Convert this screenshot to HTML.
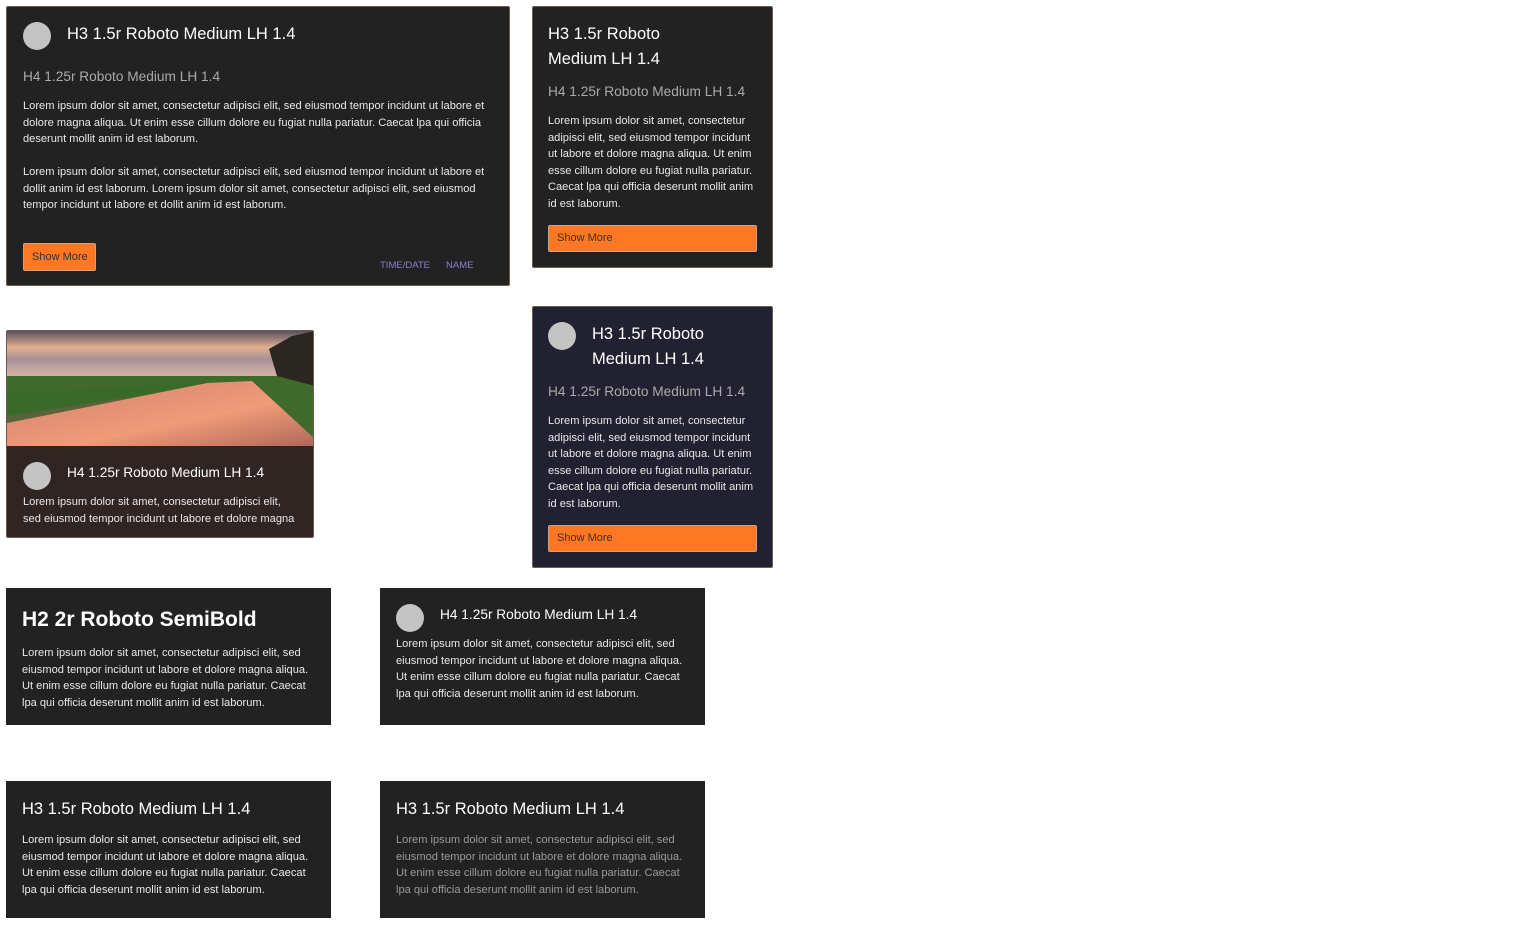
<!DOCTYPE html>
<html><head><style>
body{margin:0;width:1536px;height:932px;background:#fff;font-family:"Liberation Sans",sans-serif;position:relative;overflow:hidden}
.c{position:absolute;background:#222;box-sizing:border-box;color:#eee}
.b{border:1px solid #6e5a50;border-radius:2px}
.t{position:absolute;white-space:nowrap}
.h3{font-size:16.5px;color:#fff;line-height:25px}
.h4{font-size:13.7px;color:#aaa;line-height:20px}
.p{font-size:11.1px;line-height:16.6px;color:#e8e8e8}
.av{position:absolute;width:28px;height:28px;border-radius:50%;background:#c4c4c4}
.btn{position:absolute;background:#ff7722;border:1px solid #c9a08a;border-radius:2px;color:#333;font-size:11px;box-sizing:border-box;padding-left:8px}
</style></head><body>

<div class="c b" style="left:6px;top:6px;width:504px;height:280px">
<div class="av" style="left:16px;top:15px"></div>
<div class="t h3" style="left:60px;top:15px">H3 1.5r Roboto Medium LH 1.4</div>
<div class="t h4" style="left:16px;top:60px">H4 1.25r Roboto Medium LH 1.4</div>
<div class="t p" style="left:16px;top:91px">Lorem ipsum dolor sit amet, consectetur adipisci elit, sed eiusmod tempor incidunt ut labore et<br>dolore magna aliqua. Ut enim esse cillum dolore eu fugiat nulla pariatur. Caecat lpa qui officia<br>deserunt mollit anim id est laborum.</div>
<div class="t p" style="left:16px;top:157px">Lorem ipsum dolor sit amet, consectetur adipisci elit, sed eiusmod tempor incidunt ut labore et<br>dollit anim id est laborum. Lorem ipsum dolor sit amet, consectetur adipisci elit, sed eiusmod<br>tempor incidunt ut labore et dollit anim id est laborum.</div>
<div class="btn" style="left:16px;top:236px;width:73px;height:28px;line-height:26px">Show More</div>
<div class="t" style="left:373px;top:253px;font-size:9.5px;color:#8a7fd0">TIME/DATE</div>
<div class="t" style="left:439px;top:253px;font-size:9.5px;color:#8a7fd0">NAME</div>
</div>

<div class="c b" style="left:532px;top:6px;width:241px;height:262px">
<div class="t h3" style="left:15px;top:15px">H3 1.5r Roboto<br>Medium LH 1.4</div>
<div class="t h4" style="left:15px;top:75px">H4 1.25r Roboto Medium LH 1.4</div>
<div class="t p" style="left:15px;top:106px">Lorem ipsum dolor sit amet, consectetur<br>adipisci elit, sed eiusmod tempor incidunt<br>ut labore et dolore magna aliqua. Ut enim<br>esse cillum dolore eu fugiat nulla pariatur.<br>Caecat lpa qui officia deserunt mollit anim<br>id est laborum.</div>
<div class="btn" style="left:15px;top:218px;width:209px;height:27px;line-height:25px">Show More</div>
</div>

<div class="c b" style="left:6px;top:330px;width:308px;height:208px;background:#2f2623;overflow:hidden">
<svg style="position:absolute;left:0;top:0" width="308" height="115" viewBox="0 0 308 115">
<defs><linearGradient id="s" x1="0" y1="0" x2="0" y2="1"><stop offset="0" stop-color="#5a5060"/><stop offset=".35" stop-color="#e0b090"/><stop offset=".6" stop-color="#a89098"/><stop offset="1" stop-color="#d8b8a8"/></linearGradient>
<linearGradient id="w" x1="0" y1="0" x2="1" y2="1"><stop offset="0" stop-color="#d08070"/><stop offset=".6" stop-color="#f09a78"/><stop offset="1" stop-color="#b06858"/></linearGradient></defs>
<rect width="308" height="47" fill="url(#s)"/>
<rect y="45" width="308" height="70" fill="#3f6a2a"/>
<path d="M0 92 L80 76 L200 52 L245 50 L308 108 L308 115 L0 115Z" fill="url(#w)"/>
<path d="M262 18 L285 5 L308 0 L308 55 L270 45Z" fill="#2a2620"/>
<path d="M0 90 L80 74 L200 52 L0 62Z" fill="#3a6a28"/>
<path d="M0 92 L80 76 L150 62 L0 85Z" fill="#6a6040" opacity=".7"/>
</svg>
<div class="av" style="left:16px;top:131px"></div>
<div class="t h3" style="left:60px;top:131px;font-size:13.7px;line-height:22px">H4 1.25r Roboto Medium LH 1.4</div>
<div class="t p" style="left:16px;top:163px">Lorem ipsum dolor sit amet, consectetur adipisci elit,<br>sed eiusmod tempor incidunt ut labore et dolore magna</div>
</div>

<div class="c b" style="left:532px;top:306px;width:241px;height:262px;background:#222131">
<div class="av" style="left:15px;top:15px"></div>
<div class="t h3" style="left:59px;top:15px">H3 1.5r Roboto<br>Medium LH 1.4</div>
<div class="t h4" style="left:15px;top:75px">H4 1.25r Roboto Medium LH 1.4</div>
<div class="t p" style="left:15px;top:106px">Lorem ipsum dolor sit amet, consectetur<br>adipisci elit, sed eiusmod tempor incidunt<br>ut labore et dolore magna aliqua. Ut enim<br>esse cillum dolore eu fugiat nulla pariatur.<br>Caecat lpa qui officia deserunt mollit anim<br>id est laborum.</div>
<div class="btn" style="left:15px;top:218px;width:209px;height:27px;line-height:25px">Show More</div>
</div>

<div class="c" style="left:6px;top:588px;width:325px;height:137px">
<div class="t" style="left:16px;top:20px;font-size:21px;font-weight:bold;color:#fff">H2 2r Roboto SemiBold</div>
<div class="t p" style="left:16px;top:57px">Lorem ipsum dolor sit amet, consectetur adipisci elit, sed<br>eiusmod tempor incidunt ut labore et dolore magna aliqua.<br>Ut enim esse cillum dolore eu fugiat nulla pariatur. Caecat<br>lpa qui officia deserunt mollit anim id est laborum.</div>
</div>

<div class="c" style="left:380px;top:588px;width:325px;height:137px">
<div class="av" style="left:16px;top:16px"></div>
<div class="t h3" style="left:60px;top:16px;font-size:13.7px;line-height:22px">H4 1.25r Roboto Medium LH 1.4</div>
<div class="t p" style="left:16px;top:48px">Lorem ipsum dolor sit amet, consectetur adipisci elit, sed<br>eiusmod tempor incidunt ut labore et dolore magna aliqua.<br>Ut enim esse cillum dolore eu fugiat nulla pariatur. Caecat<br>lpa qui officia deserunt mollit anim id est laborum.</div>
</div>

<div class="c" style="left:6px;top:781px;width:325px;height:137px">
<div class="t h3" style="left:16px;top:16px">H3 1.5r Roboto Medium LH 1.4</div>
<div class="t p" style="left:16px;top:51px">Lorem ipsum dolor sit amet, consectetur adipisci elit, sed<br>eiusmod tempor incidunt ut labore et dolore magna aliqua.<br>Ut enim esse cillum dolore eu fugiat nulla pariatur. Caecat<br>lpa qui officia deserunt mollit anim id est laborum.</div>
</div>

<div class="c" style="left:380px;top:781px;width:325px;height:137px">
<div class="t h3" style="left:16px;top:16px">H3 1.5r Roboto Medium LH 1.4</div>
<div class="t p" style="left:16px;top:51px;color:#999">Lorem ipsum dolor sit amet, consectetur adipisci elit, sed<br>eiusmod tempor incidunt ut labore et dolore magna aliqua.<br>Ut enim esse cillum dolore eu fugiat nulla pariatur. Caecat<br>lpa qui officia deserunt mollit anim id est laborum.</div>
</div>

</body></html>
